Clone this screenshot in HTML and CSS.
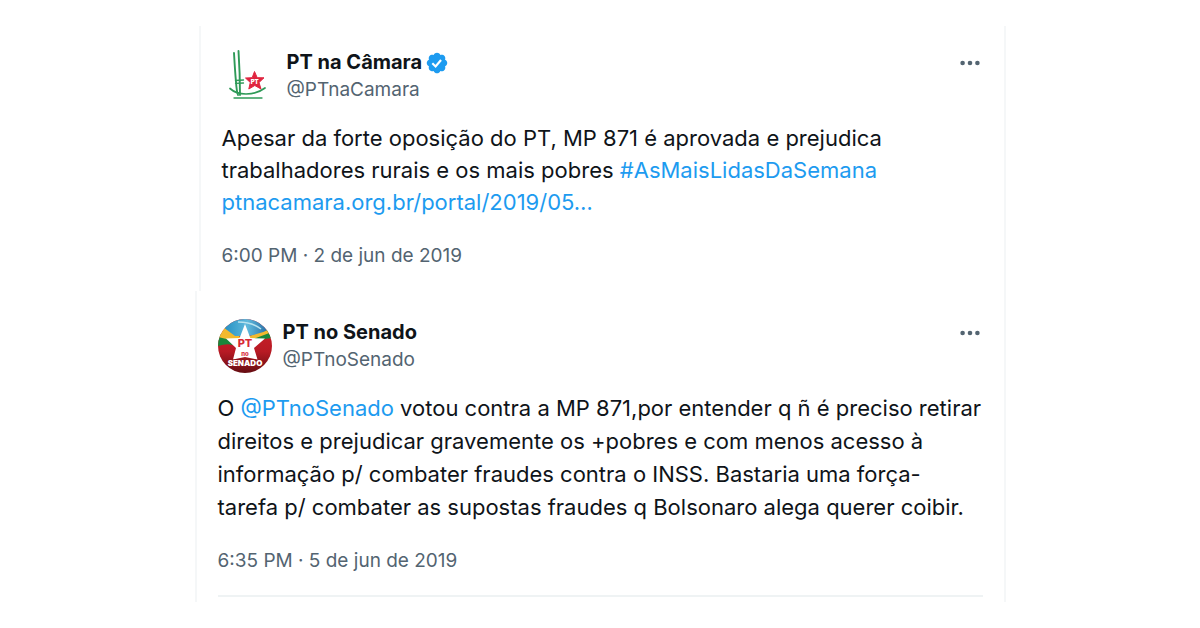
FILE: index.html
```html
<!DOCTYPE html>
<html lang="pt-BR">
<head>
<meta charset="utf-8">
<meta name="viewport" content="width=device-width, initial-scale=1">
<title>PT na Câmara e PT no Senado</title>
<link rel="stylesheet" href="styles.css">
</head>
<body>
<main class="feed">
  <article class="post post-inset">
    <header class="post-header">
      <svg class="avatar" viewBox="0 0 54 54" aria-hidden="true">
        <g fill="none" stroke="#2f9a58" stroke-linecap="round">
          <path d="M12 4Q13 22 14 33Q14.600 42 16 46" stroke-width="1.900"/>
          <path d="M16.500 2Q18 25 18 46" stroke-width="1.900"/>
          <path d="M8 39.500Q14 45 24 45Q35 45 43 39" stroke-width="1.700"/>
          <path d="M12 49L40 49M13.500 31.500L21.500 31M13.500 34.300L21.500 34" stroke-width="1.300"/>
        </g>
        <path fill="#e02540" stroke="#e02540" stroke-width="1" stroke-linejoin="round" d="M32.500 22.500L35.200 28.700L42 28.800L37 33.500L39 40L32.800 36.500L26.800 40L28.300 33.500L23.500 29L30.200 28.700Z"/>
        <text class="star-label" x="32.700" y="34.500" text-anchor="middle">PT</text>
      </svg>
      <div class="names">
        <div class="name">PT na Câmara
          <svg class="badge" viewBox="0 0 22 22" role="img" aria-label="Conta verificada"><path fill="#1d9bf0" d="M20.396 11c-.018-.646-.215-1.275-.57-1.816-.354-.54-.852-.972-1.438-1.246.223-.607.27-1.264.14-1.897-.131-.634-.437-1.218-.882-1.687-.47-.445-1.053-.75-1.687-.882-.633-.13-1.290-.083-1.897.14-.273-.587-.704-1.086-1.245-1.440S11.647 1.620 11 1.604c-.646.017-1.273.213-1.813.568s-.969.854-1.240 1.440c-.608-.223-1.267-.272-1.902-.14-.635.130-1.220.436-1.690.882-.445.470-.749 1.055-.878 1.688-.130.633-.080 1.290.144 1.896-.587.274-1.087.705-1.443 1.245-.356.540-.555 1.170-.574 1.817.020.647.218 1.276.574 1.817.356.540.856.972 1.443 1.245-.224.606-.274 1.263-.144 1.896.130.634.433 1.218.877 1.688.470.443 1.054.747 1.687.878.633.132 1.290.084 1.897-.136.274.586.705 1.084 1.246 1.439.540.354 1.170.551 1.816.569.647-.016 1.276-.213 1.817-.567s.972-.854 1.245-1.440c.604.239 1.266.296 1.903.164.636-.132 1.220-.447 1.680-.907.460-.460.776-1.044.908-1.681s.075-1.299-.165-1.903c.586-.274 1.084-.705 1.439-1.246.354-.540.551-1.170.569-1.816z"/><path fill="none" stroke="#fff" stroke-width="2" d="M6.700 11.300L9.700 14.200L14.700 8.200"/></svg>
        </div>
        <div class="handle">@PTnaCamara</div>
      </div>
      <button class="more" type="button" aria-label="Mais opções"><svg viewBox="0 0 20 6" aria-hidden="true"><circle cx="2.600" cy="3" r="2.300"/><circle cx="10" cy="3" r="2.300"/><circle cx="17.400" cy="3" r="2.300"/></svg></button>
    </header>
    <p class="body">Apesar da forte oposição do PT, MP 871 é aprovada e prejudica<br>trabalhadores rurais e os mais pobres <a href="#semana">#AsMaisLidasDaSemana</a><br><a href="#portal">ptnacamara.org.br/portal/2019/05…</a></p>
    <time class="date" datetime="2019-06-02T18:00">6:00 PM · 2 de jun de 2019</time>
  </article>
  <article class="post post-long">
    <header class="post-header">
      <svg class="avatar" viewBox="0 0 54 54" aria-hidden="true">
        <defs>
          <clipPath id="disc"><circle cx="27" cy="27" r="27"/></clipPath>
          <linearGradient id="red" x1="0" y1="0" x2="0" y2="1"><stop offset="0" stop-color="#d0222b"/><stop offset=".6" stop-color="#b81a24"/><stop offset="1" stop-color="#650d12"/></linearGradient>
          <linearGradient id="sky" x1="0" y1="0" x2="1" y2="0"><stop offset="0" stop-color="#238ec2"/><stop offset=".5" stop-color="#5fb9dc"/><stop offset="1" stop-color="#1c5f9b"/></linearGradient>
        </defs>
        <g clip-path="url(#disc)">
          <path fill="url(#red)" d="M0 0H54V54H0Z"/>
          <path fill="#1a873b" d="M0 14L25 20L54 9V19Q39 20 34 26L20 28Q12 23 0 27Z"/>
          <path fill="#f2b92e" d="M0 5L14 10L24 20L54 8V13L38 19L29 25L17 22L0 18Z"/>
          <path fill="url(#sky)" d="M6 0H54V9Q43 15 30 17L17 17L5 8Z"/>
          <path fill="none" stroke="#b8e3ef" stroke-width="1.500" d="M20 3Q34 3 43 10"/>
        </g>
        <path fill="#fff" d="M27 5L32.300 19L47 19.500L36 29L39.500 40.500L27 38L15 40.500L18 29L8 19.500L21.600 19Z"/>
        <text class="seal-pt" x="27" y="28" text-anchor="middle">PT</text>
        <text class="seal-no" x="27" y="37" text-anchor="middle">no</text>
        <text class="seal-name" x="27" y="47" text-anchor="middle">SENADO</text>
      </svg>
      <div class="names">
        <div class="name">PT no Senado</div>
        <div class="handle">@PTnoSenado</div>
      </div>
      <button class="more" type="button" aria-label="Mais opções"><svg viewBox="0 0 20 6" aria-hidden="true"><circle cx="2.600" cy="3" r="2.300"/><circle cx="10" cy="3" r="2.300"/><circle cx="17.400" cy="3" r="2.300"/></svg></button>
    </header>
    <p class="body">O <a href="#senado">@PTnoSenado</a> votou contra a MP 871,por entender q ñ é preciso retirar<br>direitos e prejudicar gravemente os +pobres e com menos acesso à<br>informação p/ combater fraudes contra o INSS. Bastaria uma força-<br>tarefa p/ combater as supostas fraudes q Bolsonaro alega querer coibir.</p>
    <time class="date" datetime="2019-06-05T18:35">6:35 PM · 5 de jun de 2019</time>
    <hr class="rule">
  </article>
</main>
</body>
</html>
```
FILE: styles.css
```css
* { box-sizing: border-box; }
body {
  margin: 0;
  background: #fff;
  color: #0f1419;
  font-family: Inter, "Liberation Sans", sans-serif;
}
.feed {
  max-width: 811px;
  margin: 0 auto;
  padding: 26px 0;
}
.post {
  padding: 28px 21px 5px;
  border: solid #f5f7f8;
  border-width: 0 2px;
}
.post-inset {
  margin-left: 4px;
  padding: 23px 21px 20px;
}
.post-header {
  display: flex;
  align-items: flex-start;
  gap: 11px;
}
.avatar { width: 54px; height: 54px; flex: none; }
.names { flex: 1; }
.name {
  display: flex;
  align-items: center;
  gap: 3px;
  font-size: 20px;
  font-weight: 700;
  line-height: 27px;
}
.badge { width: 24px; height: 24px; }
.handle {
  color: #536471;
  font-size: 19px;
  line-height: 27px;
}
.more {
  display: flex;
  padding: 11px 3px;
  border: 0;
  background: none;
  cursor: pointer;
}
.more svg { width: 20px; height: 6px; fill: #536471; }
.body {
  margin: 19px 0 23px;
  font-size: 22px;
  line-height: 32px;
}
.post-long .body {
  margin-bottom: 22px;
  line-height: 33px;
}
.body a { color: #1d9bf0; text-decoration: none; }
.date {
  display: block;
  color: #536471;
  font-size: 19px;
  line-height: 30px;
}
.rule {
  height: 2px;
  margin: 19px 0 0;
  border: 0;
  background: #eff3f4;
}
.star-label { font: 900 6px Inter, sans-serif; fill: #fff; }
.seal-pt { font: 800 11px Inter, sans-serif; fill: #d82835; }
.seal-no { font: 800 6px Inter, sans-serif; fill: #d82835; }
.seal-name {
  font: 900 8px Inter, sans-serif;
  fill: #fff;
  stroke: #8a1218;
  stroke-width: 1px;
  paint-order: stroke;
}
```
